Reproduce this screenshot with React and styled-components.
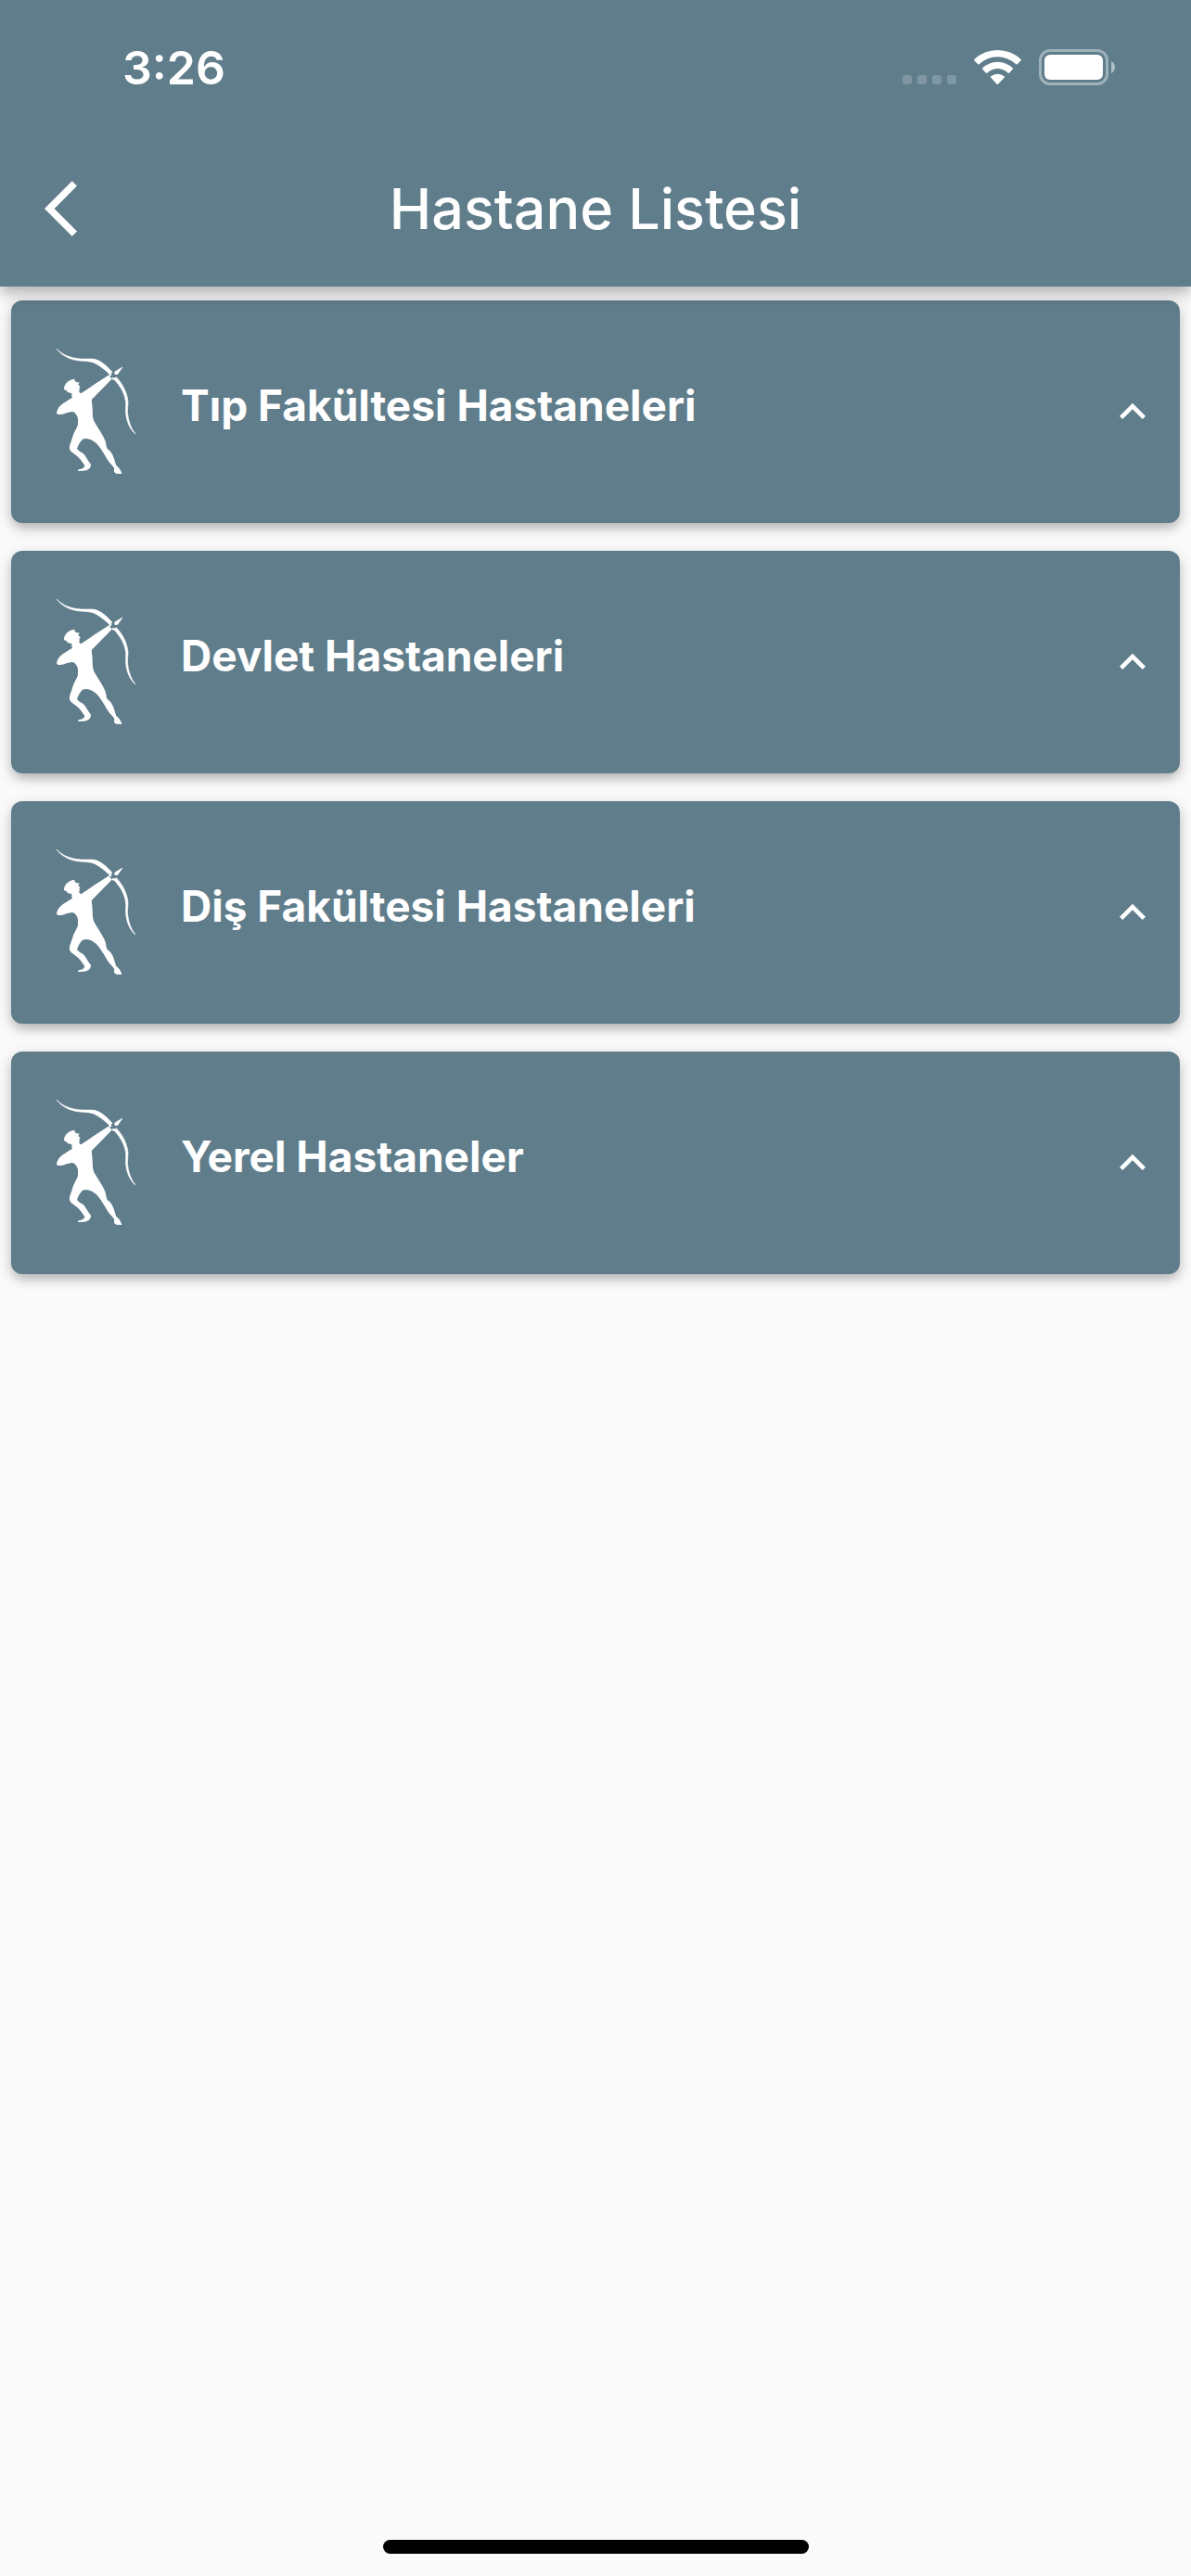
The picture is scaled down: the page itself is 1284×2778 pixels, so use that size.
import React, { useState } from 'react';
import styled, { createGlobalStyle } from 'styled-components';

const GlobalStyle = createGlobalStyle`
    * {
        box-sizing: border-box;
    }

    body {
        margin: 0;
        background-color: #fafafa;
        font-family: Inter, 'Liberation Sans', sans-serif;
    }
`;

const Page = styled.div`
    display: flex;
    flex-direction: column;
    min-height: 100vh;
`;

const Header = styled.header`
    position: relative;
    z-index: 1;
    background-color: #607d8b;
    color: #fff;
    box-shadow:
        0 6px 12px -3px rgba(0, 0, 0, 0.2),
        0 12px 15px 0 rgba(0, 0, 0, 0.1),
        0 3px 30px 0 rgba(0, 0, 0, 0.08);
`;

const StatusBar = styled.div`
    display: flex;
    align-items: center;
    justify-content: space-between;
    padding: 48px 82px 43px 132px;
`;

const Time = styled.time`
    font-size: 50px;
    line-height: 50px;
    font-weight: 600;
`;

const StatusIcons = styled.div`
    display: flex;
    align-items: center;
    gap: 19px;
`;

const AppBar = styled.div`
    display: grid;
    grid-template-columns: 1fr auto 1fr;
    align-items: center;
    height: 168px;
    padding: 0 48px;
`;

const BackButton = styled.button`
    display: flex;
    justify-self: start;
    padding: 0;
    border: none;
    background: none;
    color: inherit;
    cursor: pointer;
`;

const Title = styled.h1`
    margin: 0;
    font-size: 61px;
    line-height: 72px;
    font-weight: 500;
`;

const List = styled.ul`
    flex: 1;
    display: flex;
    flex-direction: column;
    gap: 30px;
    margin: 0;
    padding: 15px 12px;
    list-style: none;
`;

const Card = styled.button`
    display: flex;
    align-items: center;
    width: 100%;
    height: 240px;
    padding: 0 23px 0 49px;
    border: none;
    border-radius: 12px;
    background-color: #607d8b;
    color: #fff;
    font-family: inherit;
    text-align: left;
    cursor: pointer;
    box-shadow:
        0 6px 12px -3px rgba(0, 0, 0, 0.2),
        0 6px 15px 0 rgba(0, 0, 0, 0.12),
        0 3px 18px 0 rgba(0, 0, 0, 0.06);
`;

const CardLabel = styled.span`
    flex: 1;
    padding: 0 24px 14px 49px;
    font-size: 46px;
    line-height: 54px;
    font-weight: 700;
`;

const Chevron = styled.svg`
    transform: ${(props) => (props.$open ? 'rotate(180deg)' : 'none')};
`;

const HomeIndicator = styled.div`
    align-self: center;
    width: 459px;
    height: 15px;
    margin-bottom: 24px;
    border-radius: 8px;
    background-color: #000;
`;

const SignalIcon = () => (
    <svg width="58" height="40" viewBox="0 0 58 40" fill="#fff" fillOpacity="0.2">
        <rect x="0" y="28" width="10" height="10" rx="3" />
        <rect x="16" y="28" width="10" height="10" rx="3" />
        <rect x="32" y="28" width="10" height="10" rx="3" />
        <rect x="48" y="28" width="10" height="10" rx="3" />
    </svg>
);

const WifiIcon = () => (
    <svg width="51" height="40" viewBox="270 39 153 120" fill="#fff">
        <path d="M271 72Q303 42 346 42Q390 42 422 72Q423 74 422 76L410 88Q408 89 406 88Q379 64 346 64Q313 64 287 88Q285 89 283 88L271 76Q270 74 271 72Z" />
        <path d="M298 100Q319 80 346 80Q374 80 395 100Q397 102 395 104L384 116Q382 117 380 116Q365 102 346 102Q328 102 313 116Q311 117 309 116L298 104Q296 102 298 100Z" />
        <path d="M325 127Q334 119 346 119Q359 119 368 127Q370 129 368 131L348 152Q346 154 344 152L325 131Q323 129 325 127Z" />
    </svg>
);

const BatteryIcon = () => (
    <svg width="82" height="40" viewBox="0 0 82 40" fill="none">
        <rect x="1.5" y="1.5" width="72" height="36" rx="10.5" stroke="#fff" strokeOpacity="0.4" strokeWidth="3" />
        <rect x="6" y="6" width="63" height="27" rx="6" fill="#fff" />
        <path d="M78 13Q82 15 82 19.500Q82 24 78 26Z" fill="#fff" fillOpacity="0.5" />
    </svg>
);

const BackIcon = () => (
    <svg width="72" height="72" viewBox="0 0 24 24" fill="currentColor">
        <path d="M11.67 3.87L9.9 2.1 0 12l9.9 9.9 1.77-1.77L3.54 12z" />
    </svg>
);

const ArcherIcon = () => (
    <svg width="85" height="137" viewBox="33 33 255 411" fill="currentColor" overflow="visible">
        {/* bow and arrow head */}
        <g stroke="currentColor" strokeWidth="2" strokeLinejoin="round">
            <path d="M33 33C52 54 80 64 112 66C130 67 141 65 155 67C178 72 197 91 213 109L205 116C188 100 169 84 150 77C137 73 122 73 108 72C76 69 49 55 33 33Z" />
            <path d="M246 93L221 108L229 117L237 106Z" />
            <path d="M226 125C246 146 262 176 264 205C264 220 261 230 263 245C266 270 274 292 288 309C270 294 259 268 257 240C256 225 259 213 256 200C252 175 238 152 218 131Z" />
        </g>
        {/* body */}
        <path d="M57 165C57 148 69 137 84 133L92 131L91 136C93 140 97 143 107 142L103 150L110 157L106 161L108 166L105 171C108 174 110 177 112 178C140 160 172 137 203 118L207 125L213 130L147 197C145 203 149 214 149 228C150 246 149 256 155 269C166 288 183 312 190 330C194 341 193 350 197 357C207 362 214 374 218 386C222 396 223 404 226 411C233 416 242 426 244 438L226 437C220 434 217 431 220 421C213 409 203 402 196 390C187 374 176 356 165 343C151 327 132 320 117 326C109 334 103 344 99 356C105 366 117 368 124 377C131 387 134 395 144 407C144 421 133 427 120 428L102 429C102 424 106 422 112 422C119 421 122 418 124 411C116 400 107 386 96 378C87 371 77 366 75 357C73 344 81 334 84 320C88 305 98 292 102 279C101 268 104 262 100 253C97 245 91 238 84 237C71 237 59 245 45 246C38 247 33 245 33 239C36 226 44 217 54 210C64 204 75 196 84 191C80 186 83 182 82 177C74 177 67 175 65 169Z" />
        {/* hand around the bow */}
        <circle cx="207" cy="117" r="4" />
        <circle cx="224" cy="113" r="4" />
        <circle cx="217" cy="130" r="4" />
    </svg>
);

const hospitalGroups = [
    'Tıp Fakültesi Hastaneleri',
    'Devlet Hastaneleri',
    'Diş Fakültesi Hastaneleri',
    'Yerel Hastaneler',
];

const HospitalGroup = ({ name }) => {
    const [open, setOpen] = useState(false);

    return (
        <li>
            <Card type="button" aria-expanded={open} onClick={() => setOpen(!open)}>
                <ArcherIcon />
                <CardLabel>{name}</CardLabel>
                <Chevron $open={open} width="56" height="56" viewBox="0 0 24 24" fill="currentColor">
                    <path d="M12 8l-6 6 1.410 1.410L12 10.830l4.590 4.580L18 14z" />
                </Chevron>
            </Card>
        </li>
    );
};

const App = () => {
    return (
        <Page>
            <GlobalStyle />
            <Header>
                <StatusBar>
                    <Time>3:26</Time>
                    <StatusIcons>
                        <SignalIcon />
                        <WifiIcon />
                        <BatteryIcon />
                    </StatusIcons>
                </StatusBar>
                <AppBar>
                    <BackButton type="button" aria-label="Geri">
                        <BackIcon />
                    </BackButton>
                    <Title>Hastane Listesi</Title>
                </AppBar>
            </Header>
            <List>
                {hospitalGroups.map((name) => (
                    <HospitalGroup key={name} name={name} />
                ))}
            </List>
            <HomeIndicator />
        </Page>
    );
};

export default App;
